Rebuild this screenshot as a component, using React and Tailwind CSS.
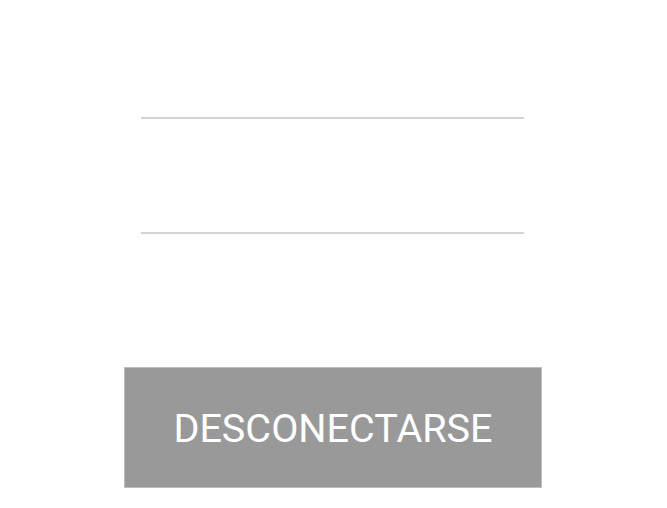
export default function App() {
  return (
    <div className="flex min-h-[508px] w-full flex-col bg-white font-['Roboto',sans-serif]">
      <div className="ml-[141px] mt-[117px] h-[2px] w-[383px] bg-[#d4d4d4]" />
      <div className="ml-[141px] mt-[113px] h-[2px] w-[383px] bg-[#d4d4d4]" />
      <button
        type="button"
        className="ml-[124px] mt-[133px] flex h-[121px] w-[418px] items-center justify-center border border-[#bdbdbd] bg-[#999999] pt-[2px] text-[39.6px] font-normal text-white"
      >
        DESCONECTARSE
      </button>
    </div>
  )
}
